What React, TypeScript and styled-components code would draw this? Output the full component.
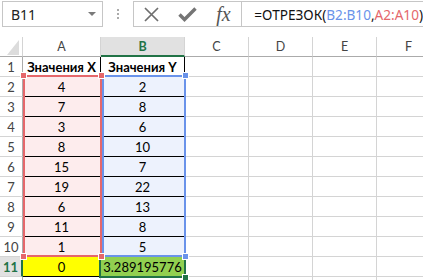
import React from 'react';
import styled, { createGlobalStyle } from 'styled-components';

const GlobalStyle = createGlobalStyle`
  html, body {
    margin: 0;
    padding: 0;
    background: #ffffff;
    overflow: hidden;
  }
  body {
    font-family: Lato, "Liberation Sans", sans-serif;
  }
`;

const Screen = styled.div`
  width: 423px;
  height: 280px;
  overflow: hidden;
  display: flex;
  flex-direction: column;
  background: #ffffff;
`;

const Toolbar = styled.div`
  flex: none;
  height: 37px;
  box-sizing: border-box;
  padding-top: 1px;
  display: flex;
  align-items: flex-start;
`;

const NameBox = styled.div`
  margin-left: 2px;
  width: 102px;
  height: 26px;
  box-sizing: border-box;
  border: 1px solid #c6c6c6;
  display: flex;
  align-items: center;
  justify-content: space-between;
  padding: 0 6px 0 8px;
  font-family: "Noto Sans", "Open Sans", sans-serif;
  font-size: 14px;
  color: #222222;
`;

const DropArrow = styled.span`
  width: 0;
  height: 0;
  border-left: 4px solid transparent;
  border-right: 4px solid transparent;
  border-top: 4px solid #7a7a7a;
`;

const Grip = styled.div`
  width: 30px;
  height: 26px;
  display: flex;
  align-items: center;
  justify-content: center;
`;

const ButtonGroup = styled.div`
  width: 111px;
  height: 26px;
  box-sizing: border-box;
  border: 1px solid #c6c6c6;
  display: flex;
  align-items: center;
`;

const IconSlot = styled.div`
  flex: 1;
  height: 100%;
  display: flex;
  align-items: center;
  justify-content: center;
`;

const FxText = styled.span`
  font-family: "Liberation Serif", "DejaVu Serif", serif;
  font-style: italic;
  font-size: 20px;
  color: #555555;
  line-height: 1;
  margin-top: -1px;
`;

const FormulaInput = styled.div`
  flex: 1;
  margin-left: -1px;
  height: 26px;
  box-sizing: border-box;
  border: 1px solid #c6c6c6;
  border-right: none;
  display: flex;
  align-items: center;
  padding-left: 12px;
  font-family: "Noto Sans", "Open Sans", sans-serif;
  font-size: 13.6px;
  color: #111111;
  white-space: nowrap;
`;

const Ref = styled.span<{ $color: string }>`
  color: ${p => p.$color};
`;

const Sheet = styled.div`
  display: grid;
  grid-template-columns: 23px 78px 84px 64px 64px 64px 64px;
  grid-auto-rows: 20px;
  width: max-content;
`;

const Corner = styled.div`
  grid-column: 1;
  grid-row: 1;
  box-sizing: border-box;
  border-right: 1px solid #d4d4d4;
  border-bottom: 1px solid #ababab;
  position: relative;
  &::after {
    content: '';
    position: absolute;
    right: 3px;
    bottom: 1px;
    width: 12px;
    height: 15px;
    background: #dcdcdc;
    clip-path: polygon(100% 0, 100% 100%, 0 100%);
  }
`;

const ColHeader = styled.div<{ $c: number; $sel?: boolean }>`
  grid-column: ${p => p.$c};
  grid-row: 1;
  box-sizing: border-box;
  border-right: 1px solid #d4d4d4;
  border-bottom: ${p => (p.$sel ? '2px solid #217346' : '1px solid #ababab')};
  background: ${p => (p.$sel ? '#e1e1e1' : '#ffffff')};
  color: ${p => (p.$sel ? '#217346' : '#444444')};
  font-weight: ${p => (p.$sel ? 700 : 400)};
  font-size: 12.5px;
  display: flex;
  align-items: center;
  justify-content: center;
  padding-top: ${p => (p.$sel ? '1px' : '0')};
`;

const RowHeader = styled.div<{ $r: number; $sel?: boolean }>`
  grid-column: 1;
  grid-row: ${p => p.$r};
  box-sizing: border-box;
  border-right: ${p => (p.$sel ? '2px solid #217346' : '1px solid #ababab')};
  border-bottom: 1px solid #d4d4d4;
  background: ${p => (p.$sel ? '#e1e1e1' : '#ffffff')};
  color: ${p => (p.$sel ? '#217346' : '#444444')};
  font-weight: ${p => (p.$sel ? 700 : 400)};
  font-size: 13px;
  display: flex;
  align-items: center;
  justify-content: center;
`;

const Cell = styled.div<{ $c: number; $r: number; $table?: boolean; $bg?: string; $bold?: boolean }>`
  grid-column: ${p => p.$c};
  grid-row: ${p => p.$r};
  box-sizing: border-box;
  border-right: 1px solid ${p => (p.$table ? '#000000' : '#d4d4d4')};
  border-bottom: 1px solid ${p => (p.$table ? '#000000' : '#d4d4d4')};
  background: ${p => p.$bg || '#ffffff'};
  font-weight: ${p => (p.$bold ? 700 : 400)};
  font-size: 13px;
  color: #000000;
  display: flex;
  align-items: center;
  justify-content: center;
  white-space: nowrap;
  overflow: hidden;
`;

const RangeBox = styled.div<{ $col: number; $from: number; $to: number; $color: string; $m: string; $z: number }>`
  grid-column: ${p => p.$col};
  grid-row: ${p => p.$from} / ${p => p.$to};
  margin: ${p => p.$m};
  box-sizing: border-box;
  border: 2px solid ${p => p.$color};
  position: relative;
  z-index: ${p => p.$z};
  pointer-events: none;
`;

const Handle = styled.span<{ $color: string; $top?: boolean; $left?: boolean }>`
  position: absolute;
  width: 5px;
  height: 5px;
  background: ${p => p.$color};
  box-shadow: 0 0 0 1px #ffffff;
  ${p => (p.$top ? 'top: -4px;' : 'bottom: -4px;')}
  ${p => (p.$left ? 'left: -4px;' : 'right: -4px;')}
`;

const ActiveCell = styled.div`
  grid-column: 3;
  grid-row: 12;
  margin: -2px -1px -1px -2px;
  box-sizing: border-box;
  border: 2px solid #217346;
  position: relative;
  z-index: 2;
  pointer-events: none;
`;

const FillHandle = styled.span`
  position: absolute;
  right: -4px;
  bottom: -4px;
  width: 5px;
  height: 5px;
  background: #217346;
  box-shadow: 0 0 0 1px #ffffff;
`;

const RED = '#e5676b';
const BLUE = '#6a93ea';

const xs = [4, 7, 3, 8, 15, 19, 6, 11, 1];
const ys = [2, 8, 6, 10, 7, 22, 13, 8, 5];
const cols = ['A', 'B', 'C', 'D', 'E', 'F'];

const CloseIcon = () => (
  <svg width="17" height="15" viewBox="0 0 17 15">
    <path d="M2 1 L15 14 M15 1 L2 14" stroke="#6e6e6e" strokeWidth="1.7" fill="none" />
  </svg>
);

const CheckIcon = () => (
  <svg width="19" height="15" viewBox="0 0 19 15">
    <path d="M1.5 7.5 L6.5 12.5 L17.5 1.5" stroke="#757575" strokeWidth="3.4" fill="none" />
  </svg>
);

const GripIcon = () => (
  <svg width="2" height="10" viewBox="0 0 2 10">
    <rect x="0" y="0" width="2" height="2" fill="#ababab" />
    <rect x="0" y="4" width="2" height="2" fill="#ababab" />
    <rect x="0" y="8" width="2" height="2" fill="#ababab" />
  </svg>
);

const App: React.FC = () => {
  const rows: React.ReactNode[] = [];
  for (let n = 1; n <= 12; n++) {
    const r = n + 1;
    // row 12 only peeks in at the bottom edge, so its number stays hidden
    rows.push(
      <RowHeader key={`h${n}`} $r={r} $sel={n === 11}>
        {n <= 11 ? n : null}
      </RowHeader>
    );
    for (let c = 2; c <= 7; c++) {
      const inTable = n <= 11 && c <= 3;
      let text: React.ReactNode = null;
      let bg: string | undefined;
      if (n === 1 && c === 2) text = 'Значения X';
      if (n === 1 && c === 3) text = 'Значения Y';
      if (n >= 2 && n <= 10 && c === 2) {
        text = xs[n - 2];
        bg = '#fdeced';
      }
      if (n >= 2 && n <= 10 && c === 3) {
        text = ys[n - 2];
        bg = '#edf2fd';
      }
      if (n === 11 && c === 2) {
        text = 0;
        bg = '#ffff00';
      }
      if (n === 11 && c === 3) {
        text = '3.289195776';
        bg = '#92d050';
      }
      rows.push(
        <Cell key={`c${n}-${c}`} $c={c} $r={r} $table={inTable} $bg={bg} $bold={n === 1 && inTable}>
          {text}
        </Cell>
      );
    }
  }

  return (
    <>
      <GlobalStyle />
      <Screen>
        <Toolbar>
          <NameBox>
            <span>B11</span>
            <DropArrow />
          </NameBox>
          <Grip>
            <GripIcon />
          </Grip>
          <ButtonGroup>
            <IconSlot>
              <CloseIcon />
            </IconSlot>
            <IconSlot>
              <CheckIcon />
            </IconSlot>
            <IconSlot>
              <FxText>fx</FxText>
            </IconSlot>
          </ButtonGroup>
          <FormulaInput>
            =ОТРЕЗОК(<Ref $color={BLUE}>B2:B10</Ref>,<Ref $color={RED}>A2:A10</Ref>)
          </FormulaInput>
        </Toolbar>

        <Sheet>
          <Corner />
          {cols.map((l, i) => (
            <ColHeader key={l} $c={i + 2} $sel={l === 'B'}>
              {l}
            </ColHeader>
          ))}
          {rows}

          <ActiveCell>
            <FillHandle />
          </ActiveCell>
          <RangeBox $col={3} $from={3} $to={12} $color={BLUE} $m="-2px -1px 0 1px" $z={3}>
            <Handle $color={BLUE} $top />
            <Handle $color={BLUE} />
          </RangeBox>
          <RangeBox $col={2} $from={3} $to={12} $color={RED} $m="-2px -1px 0 0" $z={4}>
            <Handle $color={RED} $top $left />
            <Handle $color={RED} $top />
            <Handle $color={RED} $left />
            <Handle $color={RED} />
          </RangeBox>
        </Sheet>
      </Screen>
    </>
  );
};

export default App;
